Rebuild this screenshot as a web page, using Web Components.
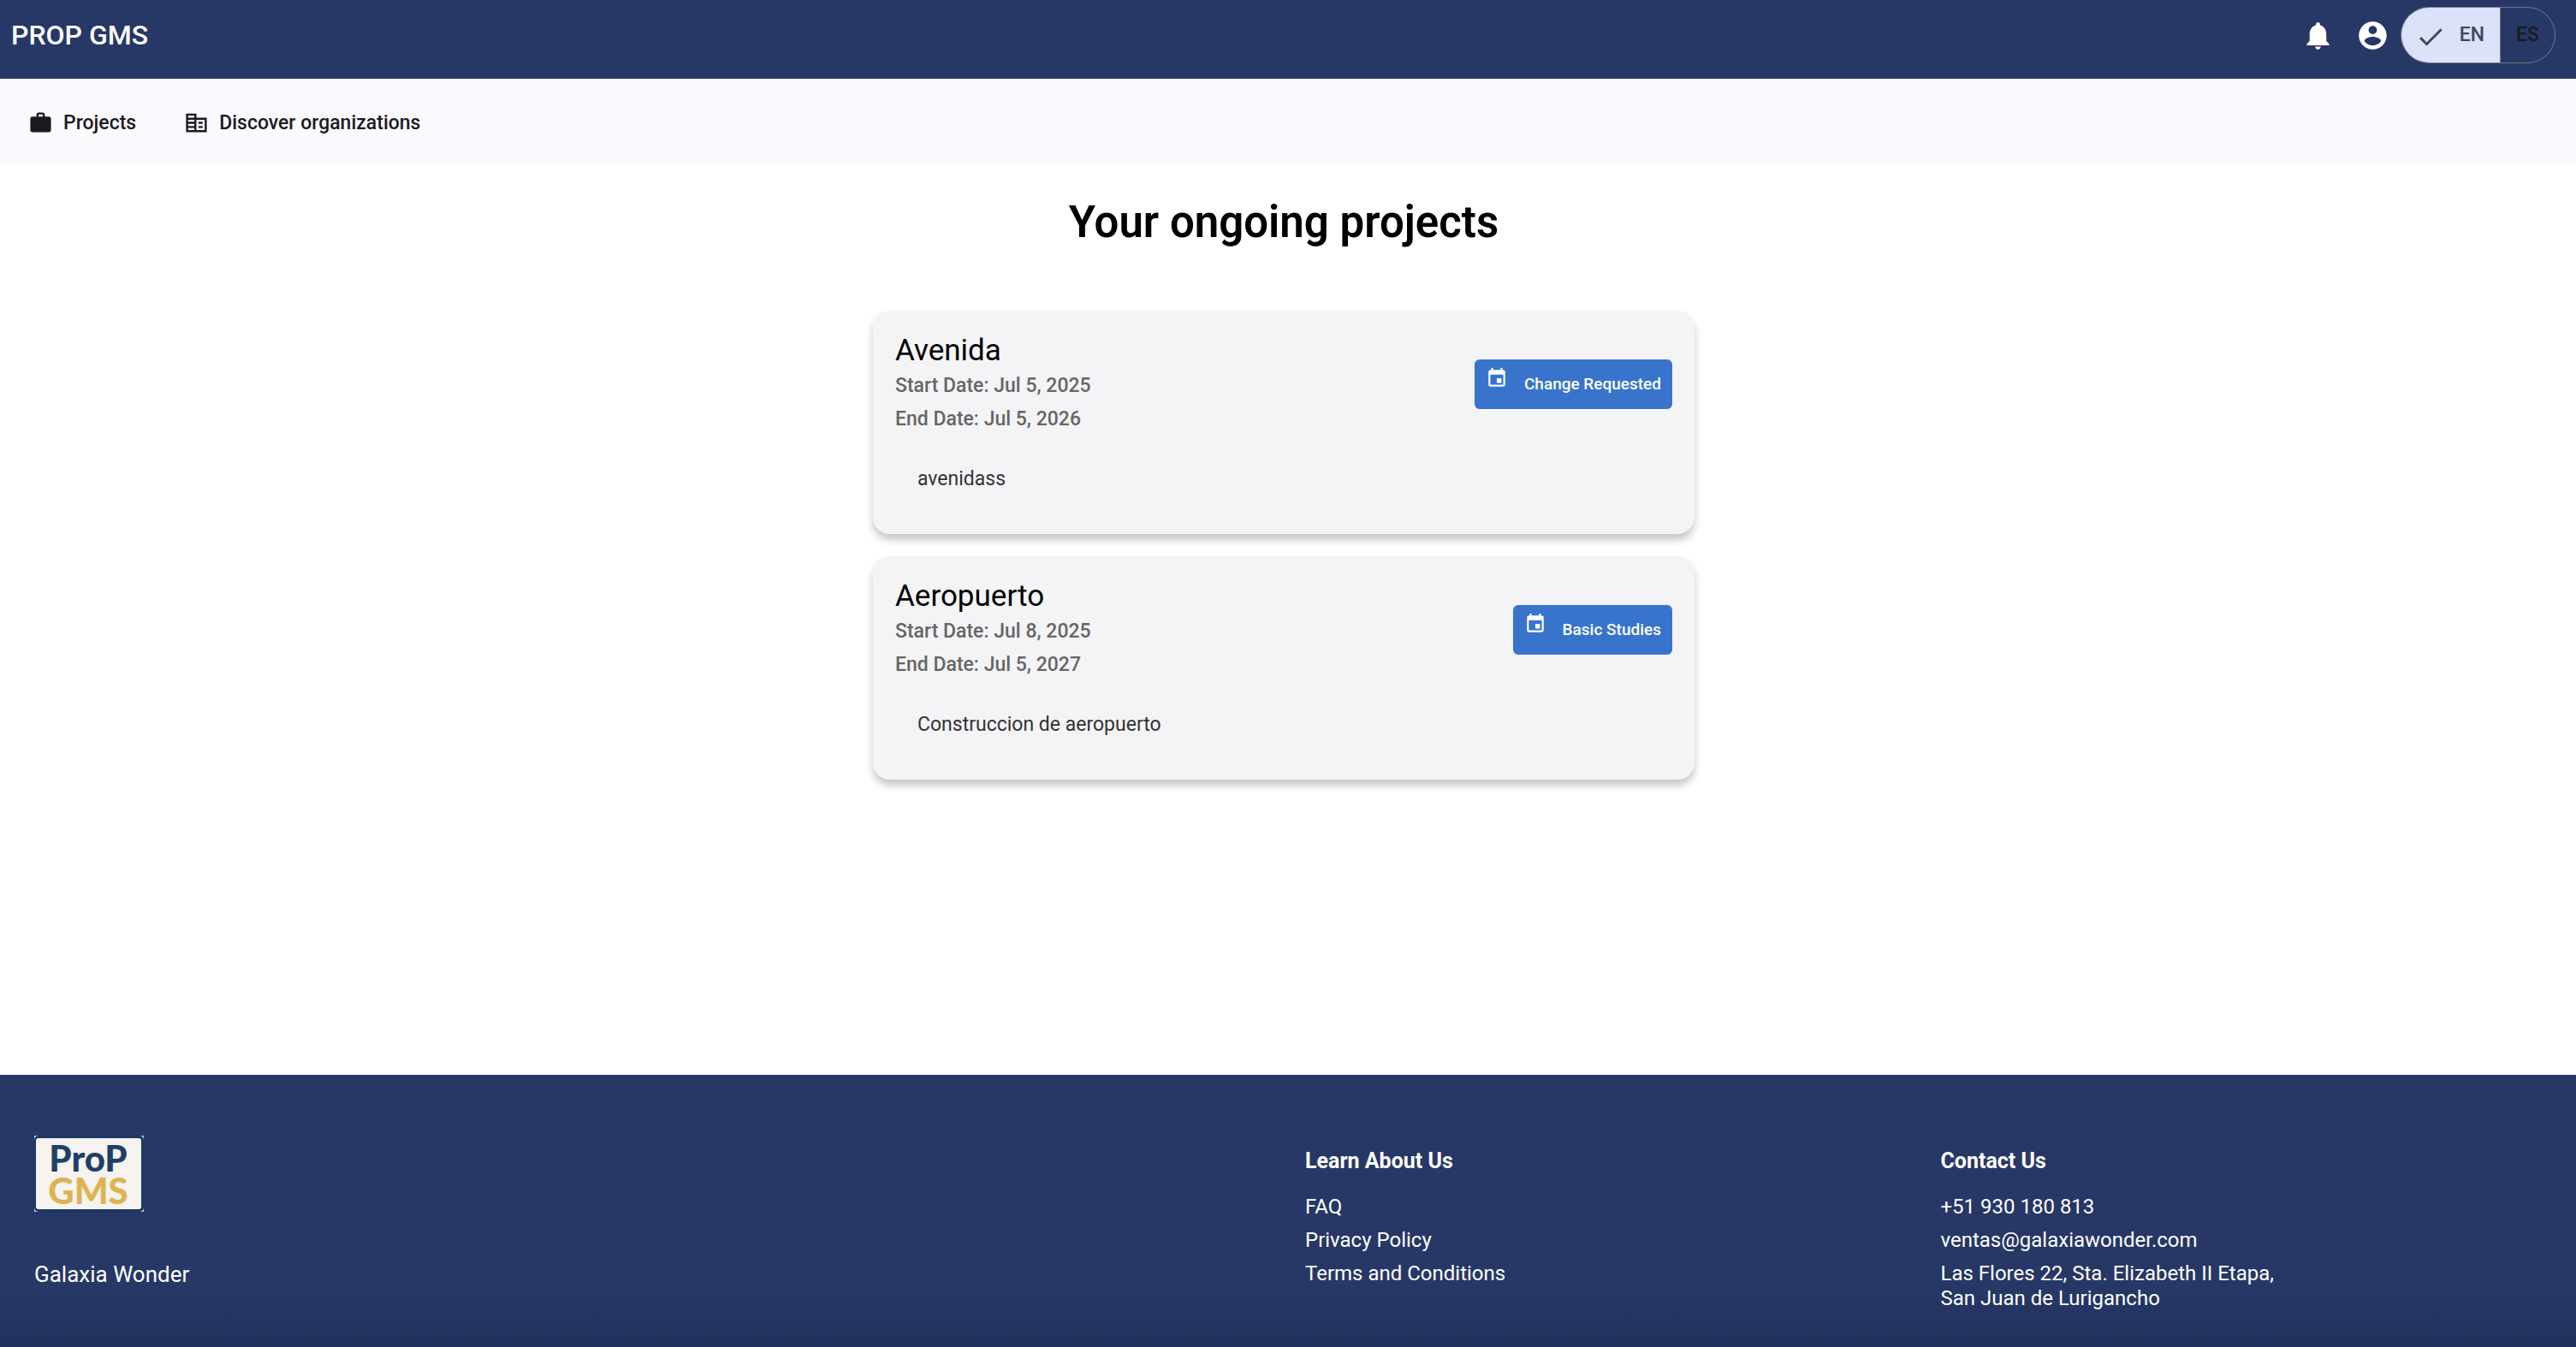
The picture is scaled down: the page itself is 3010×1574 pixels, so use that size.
<!DOCTYPE html>
<html lang="en">
<head>
<meta charset="utf-8">
<meta name="viewport" content="width=device-width, initial-scale=1">
<title>PROP GMS</title>
<style>
  html { height: 100%; }
  body { margin: 0; min-height: 100%; display: flex; font-family: Roboto, sans-serif; background: #fff; }
</style>
</head>
<body>
<gms-app></gms-app>
<script>
const define = (name, html, setup) => {
  const template = document.createElement('template');
  template.innerHTML = html;
  customElements.define(name, class extends HTMLElement {
    constructor() {
      super();
      this.attachShadow({ mode: 'open' }).append(template.content.cloneNode(true));
    }
    connectedCallback() { if (setup) setup(this, this.shadowRoot); }
  });
};

const ICONS = {
  bell: 'M12 22c1.1 0 2-.9 2-2h-4c0 1.1.89 2 2 2zm6-6v-5c0-3.07-1.64-5.64-4.5-6.32V4c0-.83-.67-1.5-1.5-1.5s-1.5.67-1.5 1.5v.68C7.63 5.36 6 7.92 6 11v5l-2 2v1h16v-1l-2-2z',
  account: 'M12 2C6.48 2 2 6.48 2 12s4.48 10 10 10 10-4.48 10-10S17.52 2 12 2zm0 3c1.66 0 3 1.34 3 3s-1.34 3-3 3-3-1.34-3-3 1.34-3 3-3zm0 14.2c-2.5 0-4.71-1.28-6-3.22.03-1.99 4-3.08 6-3.08 1.99 0 5.97 1.09 6 3.08-1.29 1.94-3.5 3.22-6 3.22z',
  check: 'M9 17.6L4.8 13.4l-1.4 1.4L9 20.4 21.2 8.2l-1.4-1.4z',
  work: 'M20 6h-4V4c0-1.11-.89-2-2-2h-4c-1.11 0-2 .89-2 2v2H4c-1.11 0-1.99.89-1.99 2L2 19c0 1.11.89 2 2 2h16c1.11 0 2-.89 2-2V8c0-1.11-.89-2-2-2zm-6 0h-4V4h4v2z',
  business: 'M12 7V3H2v18h20V7H12zM10 19H4v-2h6v2zm0-4H4v-2h6v2zm0-4H4V9h6v2zm0-4H4V5h6v2zm10 12h-8V9h8v10zm-2-8h-4v2h4v-2zm0 4h-4v2h4v-2z',
  event: 'M17 12h-5v5h5v-5zM16 1v2H8V1H6v2H5c-1.11 0-1.99.9-1.99 2L3 19c0 1.1.89 2 2 2h14c1.1 0 2-.9 2-2V5c0-1.1-.9-2-2-2h-1V1h-2zm3 18H5V8h14v11z'
};

define('gms-icon', `
  <style>
    :host { display: block; flex: none; width: var(--size, 29px); height: var(--size, 29px); }
    svg { display: block; width: 100%; height: 100%; fill: currentColor; }
  </style>
  <svg viewBox="0 0 24 24" aria-hidden="true"><path/></svg>
`, (host, root) => root.querySelector('path').setAttribute('d', ICONS[host.getAttribute('name')]));

define('gms-language', `
  <style>
    :host { display: flex; border: 1px solid #74777f; border-radius: 33px; overflow: hidden; }
    button { all: unset; box-sizing: border-box; display: flex; align-items: center; gap: 16px; height: 64px;
      padding: 0 18px; font: 500 23px/32px Roboto, sans-serif; color: #1a1b1f; cursor: pointer; }
    button + button { border-left: 1px solid #74777f; }
    button[aria-pressed=true] { padding-left: 16px; background: #dbe2f9; color: #3f4759; }
    gms-icon { --size: 36px; }
  </style>
  <button type="button" aria-pressed="true"><gms-icon name="check"></gms-icon>EN</button>
  <button type="button" aria-pressed="false">ES</button>
`);

define('gms-header', `
  <style>
    :host { display: block; background: #273766; color: #fff; }
    header { display: flex; align-items: center; padding: 8px 24px 18px 13px; }
    .brand { margin-right: auto; font: 500 32px/40px Roboto, sans-serif; color: inherit; text-decoration: none; }
    .icon { all: unset; display: block; margin-right: 25px; cursor: pointer; }
    .icon + .icon { margin-right: 13px; }
    gms-icon { --size: 39px; }
  </style>
  <header>
    <a class="brand" href="#">PROP GMS</a>
    <button class="icon" type="button" aria-label="Notifications"><gms-icon name="bell"></gms-icon></button>
    <button class="icon" type="button" aria-label="Account"><gms-icon name="account"></gms-icon></button>
    <gms-language></gms-language>
  </header>
`);

define('gms-nav', `
  <style>
    :host { display: block; background: #faf9fe; color: #1a1b1f; }
    nav { display: flex; gap: 56px; padding: 32px 33px; }
    a { display: flex; align-items: center; gap: 12px; font: 500 23px/39px Roboto, sans-serif; color: inherit; text-decoration: none; }
  </style>
  <nav>
    <a href="#"><gms-icon name="work"></gms-icon>Projects</a>
    <a href="#"><gms-icon name="business"></gms-icon>Discover organizations</a>
  </nav>
`);

define('gms-project', `
  <style>
    :host { display: block; padding: 26px; border-radius: 20px; background: #f4f4f7; box-shadow: 0 7px 10px rgba(0, 0, 0, .22); }
    header { display: flex; align-items: center; justify-content: space-between; }
    h2 { margin: 0; font: 400 35px/42px Roboto, sans-serif; color: #000; }
    .dates { font: 500 23px/39px Roboto, sans-serif; color: #666; }
    .text { margin: 31px 26px 19px; font: 400 23px/39px Roboto, sans-serif; color: #333; }
    button { all: unset; box-sizing: border-box; display: flex; gap: 19px; height: 58px; padding: 9px 13px;
      border-radius: 6px; background: #3874cc; color: #fff; font: 500 19px/40px Roboto, sans-serif; cursor: pointer; }
    gms-icon { --size: 26px; }
  </style>
  <header>
    <div>
      <h2><slot name="name"></slot></h2>
      <div class="dates"><slot name="start"></slot></div>
      <div class="dates"><slot name="end"></slot></div>
    </div>
    <button type="button"><gms-icon name="event"></gms-icon><slot name="status"></slot></button>
  </header>
  <div class="text"><slot></slot></div>
`);

define('gms-logo', `
  <style>
    :host { display: block; }
    svg { display: block; width: 128px; height: 89px; }
    text { font-family: Lato, sans-serif; font-weight: 900; font-size: 42px; text-anchor: middle; }
  </style>
  <svg viewBox="0 0 128 89" role="img" aria-label="ProP GMS">
    <rect width="128" height="89" fill="#c9cedb"/>
    <rect width="128" height="89" rx="5" fill="#1b3a63"/>
    <rect x="2" y="3" width="123" height="83" rx="3" fill="#f6f3f0"/>
    <text><tspan x="63" y="42" fill="#1f3f68">ProP</tspan><tspan x="63" y="80" fill="#dfb352">GMS</tspan></text>
  </svg>
`);

define('gms-footer', `
  <style>
    :host { display: block; background: linear-gradient(#273766 80%, #22305c); color: #fff; }
    footer { display: grid; grid-template-columns: 2fr 1fr 1fr; padding: 71px 0 42px 40px; font: 400 24px/29px Roboto, sans-serif; }
    .company { display: flex; flex-direction: column; gap: 59px; font-size: 26px; }
    section { padding-top: 14px; }
    h3 { margin: 0 0 23px; font: 700 25px/32px Roboto, sans-serif; }
    ul { list-style: none; margin: 0; padding: 0; display: grid; gap: 10px; }
    a { color: inherit; text-decoration: none; }
    address { font-style: normal; }
  </style>
  <footer>
    <div class="company"><gms-logo></gms-logo><span>Galaxia Wonder</span></div>
    <section>
      <h3>Learn About Us</h3>
      <ul>
        <li><a href="#">FAQ</a></li>
        <li><a href="#">Privacy Policy</a></li>
        <li><a href="#">Terms and Conditions</a></li>
      </ul>
    </section>
    <section>
      <h3>Contact Us</h3>
      <ul>
        <li>+51 930 180 813</li>
        <li><a href="mailto:ventas@galaxiawonder.com">ventas@galaxiawonder.com</a></li>
        <li><address>Las Flores 22, Sta. Elizabeth II Etapa,<br>San Juan de Lurigancho</address></li>
      </ul>
    </section>
  </footer>
`);

define('gms-app', `
  <style>
    :host { flex: 1; display: flex; flex-direction: column; }
    main { flex: 1; display: flex; flex-direction: column; align-items: center; padding: 34px 10px 26px 0; }
    h1 { margin: 0 0 72px; font: 600 51px/62px Roboto, sans-serif; color: #000; }
    .list { display: grid; gap: 26px; width: 100%; max-width: 960px; }
  </style>
  <gms-header></gms-header>
  <gms-nav></gms-nav>
  <main>
    <h1>Your ongoing projects</h1>
    <div class="list">
      <gms-project>
        <span slot="name">Avenida</span>
        <span slot="start">Start Date: Jul 5, 2025</span>
        <span slot="end">End Date: Jul 5, 2026</span>
        <span slot="status">Change Requested</span>
        avenidass
      </gms-project>
      <gms-project>
        <span slot="name">Aeropuerto</span>
        <span slot="start">Start Date: Jul 8, 2025</span>
        <span slot="end">End Date: Jul 5, 2027</span>
        <span slot="status">Basic Studies</span>
        Construccion de aeropuerto
      </gms-project>
    </div>
  </main>
  <gms-footer></gms-footer>
`);
</script>
</body>
</html>
